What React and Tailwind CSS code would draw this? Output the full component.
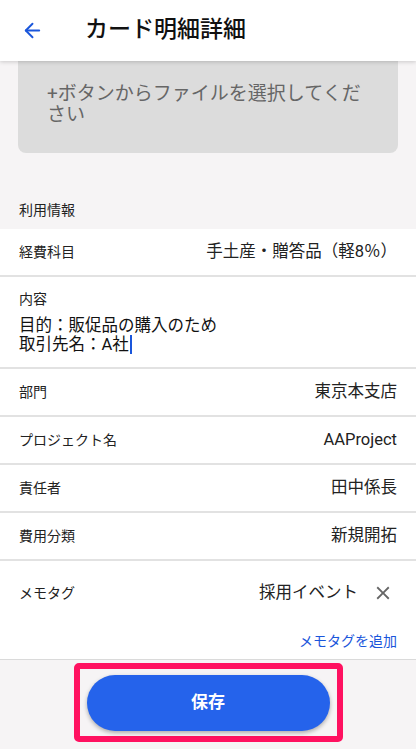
import React from "react";
import { FiArrowLeft } from "react-icons/fi";
import { MdClose } from "react-icons/md";

const rows = [
  { label: "部門", value: "東京本支店" },
  { label: "プロジェクト名", value: "AAProject" },
  { label: "責任者", value: "田中係長" },
  { label: "費用分類", value: "新規開拓" },
];

function Row({ label, value }) {
  return (
    <div className="flex items-center justify-between h-[48px] px-[19px] bg-white border-b-2 border-[#e2e2e2]">
      <span className="text-[14px] text-[#222]">{label}</span>
      <span className="text-[16.5px] text-[#222]">{value}</span>
    </div>
  );
}

export default function App() {
  return (
    <div
      className="w-[416px] h-[749px] flex flex-col bg-[#f6f4f5] overflow-hidden"
      style={{ fontFamily: "Roboto, 'Noto Sans CJK JP', sans-serif" }}
    >
      <header className="relative z-10 h-[61px] shrink-0 flex items-center bg-white shadow-[0_1px_4px_rgba(0,0,0,0.18)]">
        <FiArrowLeft className="ml-[21px] text-[#1a56db] text-[23px]" />
        <h1 className="ml-[41px] text-[23px] text-[#111] font-medium">カード明細詳細</h1>
      </header>

      <div className="mx-[18px] rounded-b-[8px] bg-[#dcdcdc] pl-[29px] pr-[20px] pt-[22px] pb-[28px]">
        <p className="text-[19px] leading-[21px] text-[#666]">+ボタンからファイルを選択してください</p>
      </div>

      <div className="h-[76px] flex items-end px-[19px] pb-[8px]">
        <span className="text-[14px] text-[#222]">利用情報</span>
      </div>

      <div className="bg-white">
        <div className="flex items-center justify-between h-[48px] px-[19px] border-b-2 border-[#e2e2e2]">
          <span className="text-[14px] text-[#222]">経費科目</span>
          <span className="text-[16.5px] text-[#222]">手土産・贈答品（軽8％）</span>
        </div>

        <div className="h-[92px] px-[19px] pt-[12px] border-b-2 border-[#e2e2e2]">
          <div className="text-[14px] text-[#222]">内容</div>
          <div className="mt-[6px] text-[16.5px] leading-[19px] text-[#111]">
            <div>目的：販促品の購入のため</div>
            <div className="flex items-center">
              取引先名：A社
              <span className="inline-block w-[2px] h-[19px] bg-[#1a56db] ml-[1px]" />
            </div>
          </div>
        </div>

        {rows.map((r) => (
          <Row key={r.label} label={r.label} value={r.value} />
        ))}

        <div className="h-[99px] px-[19px] border-b border-[#dadada] flex flex-col">
          <div className="flex items-center justify-between h-[64px] pr-[3px]">
            <span className="text-[14px] text-[#222]">メモタグ</span>
            <div className="flex items-center gap-[14px]">
              <span className="text-[16.5px] text-[#222]">採用イベント</span>
              <MdClose className="text-[#666] text-[22px]" />
            </div>
          </div>
          <div className="flex justify-end mt-[6px]">
            <span className="text-[14px] text-[#1a56db]">メモタグを追加</span>
          </div>
        </div>
      </div>

      <div className="flex-1 flex justify-center pt-[3px]">
        <div className="w-[269px] h-[79px] rounded-[5px] border-[6px] border-[#ff1160] flex items-center justify-center">
          <button className="w-[243px] h-[56px] rounded-full bg-[#2563eb] text-white text-[17px] font-bold shadow-[0_2px_4px_rgba(0,0,0,0.3)]">
            保存
          </button>
        </div>
      </div>
    </div>
  );
}
